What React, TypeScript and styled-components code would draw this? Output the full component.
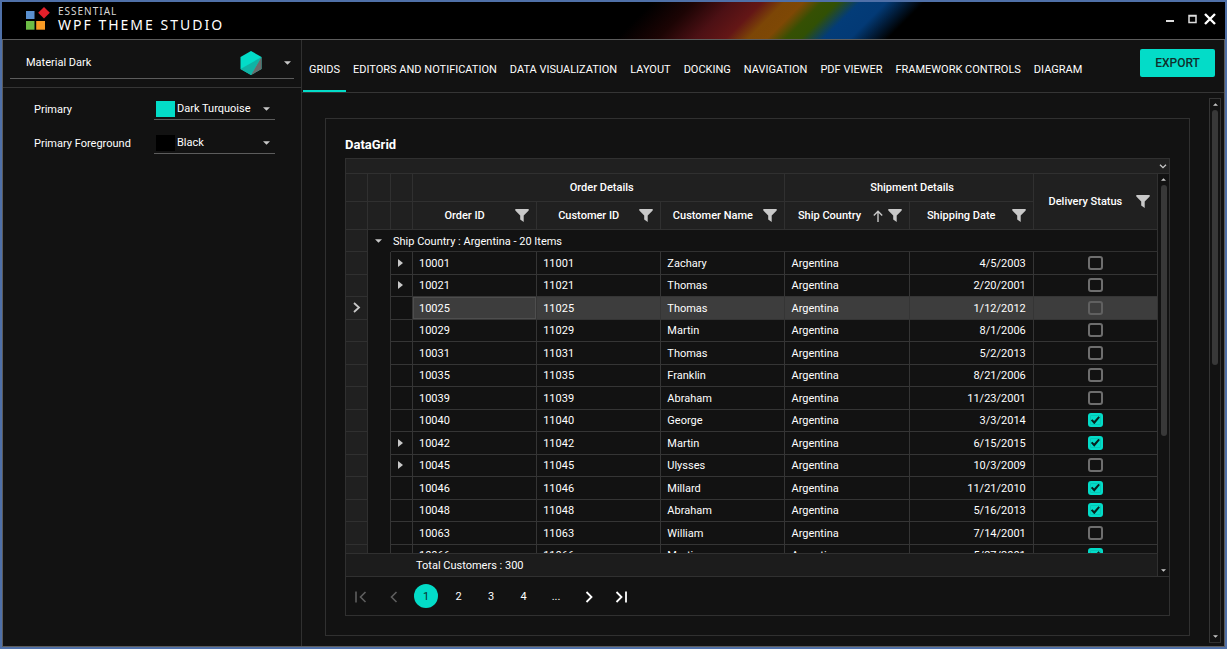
import React from "react";
import styled, { createGlobalStyle, css } from "styled-components";

const c = {
  frame: "#4f70a8",
  bg: "#121212",
  raised: "#202020",
  line: "#303030",
  lineStrong: "#353535",
  edge: "#5c5c5c",
  text: "#ffffff",
  icon: "#c8c8c8",
  accent: "#03dcc8",
};

const Global = createGlobalStyle`
  *, *::before, *::after { box-sizing: border-box; }
  body { margin: 0; background: ${c.bg}; }
  body, button, select, input { font-family: Roboto, "Liberation Sans", sans-serif; font-size: 11px; font-weight: 400; line-height: 16px; color: ${c.text}; }
  button { background: none; border: 0; padding: 0; }
  svg { display: block; flex: none; }
`;

const Window = styled.div`
  height: 100vh;
  display: flex;
  flex-direction: column;
  border: 2px solid ${c.frame};
  background: ${c.bg};
`;

const TitleBar = styled.header`
  flex: none;
  height: 37px;
  display: flex;
  align-items: center;
  justify-content: space-between;
  padding: 0 9px 4px 24px;
  background: linear-gradient(
      135deg,
      #000 14%, #1c0404 25%, #4c1014 35%, #631616 43%, #7c4606 49%, #7e4805 54%,
      #365003 59%, #315004 63%, #033c78 69%, #033a76 76%, #000 86%
    ) 598px 0 / 340px 100% no-repeat #000;
`;

const Brand = styled.div`
  display: flex;
  align-items: center;
  gap: 8px;
  font-family: "Noto Sans", "Open Sans", sans-serif;
  color: #fff;
`;

const BrandSmall = styled.div`
  font-size: 10px;
  line-height: 12px;
  letter-spacing: 1px;
  color: #d8d8d8;
`;

const BrandLarge = styled.div`
  font-size: 14px;
  line-height: 16px;
  letter-spacing: 2px;
`;

const WindowButtons = styled.div`
  display: flex;
  align-items: center;
  gap: 7px;
`;

const Workspace = styled.div`
  flex: 1;
  min-height: 0;
  display: flex;
  border: 1px solid ${c.edge};
`;

const Sidebar = styled.aside`
  flex: none;
  width: 299px;
  border-right: 1px solid ${c.line};
`;

const ThemePicker = styled.div`
  height: 48px;
  padding: 8px 7px 0;
  border-bottom: 1px solid ${c.lineStrong};
`;

const ThemeField = styled.label`
  display: flex;
  align-items: center;
  height: 31px;
  padding: 0 3px 0 16px;
  border-bottom: 1px solid ${c.edge};
`;

const HexIcon = styled.svg`
  margin-right: 22px;
`;

const Select = styled.select`
  flex: 1;
  min-width: 0;
  height: 20px;
  padding: 0;
  border: 0;
  appearance: none;
  background: transparent;
  color: ${c.text};
`;

const Settings = styled.div`
  display: flex;
  flex-direction: column;
  gap: 13px;
  padding: 11px 26px 0 31px;
`;

const Setting = styled.label`
  display: flex;
  align-items: center;
  justify-content: space-between;
`;

const ColorField = styled.span`
  display: flex;
  align-items: center;
  width: 121px;
  height: 21px;
  padding: 0 5px 0 2px;
  border-bottom: 1px solid ${c.edge};
`;

const Swatch = styled.span<{ $color: string }>`
  width: 19px;
  height: 16px;
  margin-right: 2px;
  background: ${(p) => p.$color};
`;

const Main = styled.main`
  flex: 1;
  min-width: 0;
  display: flex;
  flex-direction: column;
`;

const TopBar = styled.div`
  flex: none;
  display: flex;
  justify-content: space-between;
  height: 53px;
  padding: 0 9px 0 1px;
  border-bottom: 1px solid ${c.lineStrong};
`;

const Tabs = styled.nav`
  display: flex;
`;

const Tab = styled.a<{ $active?: boolean }>`
  padding: 22px 6px 0;
  color: ${c.text};
  text-decoration: none;
  white-space: nowrap;
  border-bottom: 2px solid ${(p) => (p.$active ? c.accent : "transparent")};
  & + & {
    margin-left: 1px;
  }
`;

const ExportButton = styled.button`
  width: 75px;
  height: 28px;
  margin-top: 9px;
  border-radius: 2px;
  background: ${c.accent};
  color: #10302d;
  font-size: 12px;
  font-weight: 500;
`;

const Content = styled.div`
  flex: 1;
  min-height: 0;
  display: flex;
  gap: 19px;
  padding: 5px 3px 3px 23px;
`;

const Panel = styled.section`
  flex: 1;
  min-width: 0;
  display: flex;
  flex-direction: column;
  margin: 20px 0 7px;
  padding: 18px 19px 19px;
  border: 1px solid ${c.line};
`;

const PanelTitle = styled.h2`
  margin: 0 0 5px;
  font-size: 13px;
  line-height: 16px;
  font-weight: 700;
  color: #fff;
`;

const Grid = styled.div`
  flex: 1;
  min-height: 0;
  display: flex;
  flex-direction: column;
  border: 1px solid ${c.line};
`;

const GroupArea = styled.div`
  flex: none;
  display: flex;
  align-items: center;
  justify-content: flex-end;
  height: 15px;
  padding-right: 2px;
  background: ${c.raised};
  border-bottom: 1px solid ${c.line};
`;

const GridBody = styled.div`
  flex: 1;
  min-height: 0;
  display: flex;
`;

const Viewport = styled.div`
  flex: 1;
  min-width: 0;
  display: flex;
  flex-direction: column;
`;

const Clip = styled.div`
  flex: 1;
  min-height: 0;
  overflow: hidden;
`;

const Table = styled.table`
  width: 100%;
  height: 393px;
  table-layout: fixed;
  border-collapse: separate;
  border-spacing: 0;
`;

const Col = styled.col<{ $w?: number }>`
  width: ${(p) => (p.$w ? p.$w + "px" : "auto")};
`;

const HeadRow = styled.tr`
  height: 28px;
`;

const GroupRow = styled.tr`
  height: 22px;
`;

const lines = css`
  border-right: 1px solid ${c.line};
  border-bottom: 1px solid ${c.line};
`;

const Head = styled.th`
  ${lines}
  padding: 0 0 0 6px;
  background: ${c.raised};
  font-weight: 500;
  text-align: center;
`;

const HeadBlank = styled.td`
  ${lines}
  padding: 0;
  background: ${c.raised};
`;

const HeadInner = styled.div`
  display: flex;
  align-items: center;
  gap: 5px;
  padding-right: 7px;
`;

const HeadLabel = styled.span`
  flex: 1;
  white-space: nowrap;
`;

const RowHeader = styled.td`
  ${lines}
  padding: 0 0 0 6px;
  background: ${c.raised};
`;

const Indent = styled.td<{ $line?: boolean }>`
  padding: 0 0 0 7px;
  border-right: 1px solid ${(p) => (p.$line ? c.lineStrong : "transparent")};
`;

const GroupCaption = styled.td`
  padding: 2px 0 0 2px;
  ${lines}
`;

const Cell = styled.td<{ $on?: boolean; $focus?: boolean }>`
  padding: 2px 7px 0 6px;
  border-right: 1px solid ${c.lineStrong};
  border-bottom: 1px solid ${c.lineStrong};
  background: ${(p) => (p.$on ? "#3d3d3d" : "transparent")};
  box-shadow: ${(p) => (p.$focus ? "inset 0 0 0 1px #4e4e4e" : "none")};
`;

const DateCell = styled(Cell)`
  text-align: right;
`;

const IconCell = styled(Cell)`
  padding: 0 7px;
`;

const Check = styled.input<{ $on?: boolean }>`
  appearance: none;
  display: grid;
  place-items: center;
  width: 15px;
  height: 14px;
  margin: 0 auto;
  border: 2px solid ${(p) => (p.$on ? "#606060" : "#6e6e6e")};
  border-radius: 3px;
  &:checked {
    border-color: ${c.accent};
    background: ${c.accent};
    box-shadow: inset 0 0 0 1px #04c8b6;
  }
  &:checked::before {
    content: "";
    width: 9px;
    height: 8px;
    background: #06201d;
    clip-path: polygon(0 54%, 16% 36%, 36% 60%, 84% 0, 100% 16%, 38% 100%);
  }
`;

const Summary = styled.div`
  flex: none;
  height: 24px;
  padding: 4px 0 0 70px;
  background: #1c1c1c;
  border: solid ${c.line};
  border-width: 1px 1px 1px 0;
`;

const Bar = styled.div<{ $framed?: boolean }>`
  flex: none;
  width: ${(p) => (p.$framed ? 12 : 11)}px;
  display: flex;
  flex-direction: column;
  align-items: center;
  padding: 4px 0;
  border: ${(p) => (p.$framed ? "1px solid " + c.lineStrong : "0")};
  border-bottom: 1px solid ${c.line};
`;

const Track = styled.div`
  flex: 1;
  width: 6px;
  padding: 4px 0;
`;

const Thumb = styled.div<{ $size: number }>`
  height: ${(p) => p.$size}%;
  border-radius: 3px;
  background: #383838;
`;

const Pager = styled.nav`
  flex: none;
  display: flex;
  align-items: center;
  justify-content: space-between;
  width: 284px;
  height: 38px;
  margin-left: 3px;
`;

const PageButton = styled.button<{ $active?: boolean; $dim?: boolean }>`
  display: grid;
  place-items: center;
  width: 24px;
  height: 24px;
  padding-top: 1px;
  border-radius: 12px;
  background: ${(p) => (p.$active ? c.accent : "transparent")};
  color: ${(p) => (p.$active ? "#06302c" : p.$dim ? "#5e5e5e" : c.text)};
`;

const Caret = ({ dir = "down", w = 7 }: { dir?: "down" | "up" | "right"; w?: number }) => {
  const tall = dir === "right";
  const d = dir === "down" ? "M0 0H8L4 4Z" : dir === "up" ? "M0 4H8L4 0Z" : "M0 0V8L5 4Z";
  return (
    <svg width={tall ? 5 : w} height={tall ? 8 : Math.round(w / 2)} viewBox={tall ? "0 0 5 8" : "0 0 8 4"} aria-hidden="true">
      <path d={d} fill={c.icon} />
    </svg>
  );
};

const Stroke = ({ w, h, d, sw = 2, color = "currentColor" }: { w: number; h: number; d: string; sw?: number; color?: string }) => (
  <svg width={w} height={h} viewBox={`0 0 ${w} ${h}`} fill="none" stroke={color} strokeWidth={sw} aria-hidden="true">
    <path d={d} />
  </svg>
);

const Funnel = () => (
  <svg width="14" height="13" viewBox="0 0 14 13" aria-hidden="true">
    <path d="M0.3 0H13.7V1.4L8.7 6.6V13L5.2 10.4V6.6L0.3 1.4Z" fill={c.icon} />
  </svg>
);

const Logo = () => (
  <svg width="24" height="24" viewBox="0 0 24 24" aria-hidden="true">
    <rect x="0" y="4" width="8.5" height="8" fill="#5a90cf" />
    <path d="M18 0L23.8 5.8L18 11.6L12.2 5.8Z" fill="#e4202a" />
    <rect x="0" y="14" width="8.5" height="8.7" fill="#6cbc45" />
    <rect x="10.2" y="14" width="8.8" height="8.7" fill="#f99b24" />
  </svg>
);

const tabs = ["GRIDS", "EDITORS AND NOTIFICATION", "DATA VISUALIZATION", "LAYOUT", "DOCKING", "NAVIGATION", "PDF VIEWER", "FRAMEWORK CONTROLS", "DIAGRAM"];

type Order = [number, string, string, boolean, boolean];
const orders: Order[] = [
  [10001, "Zachary", "4/5/2003", false, true],
  [10021, "Thomas", "2/20/2001", false, true],
  [10025, "Thomas", "1/12/2012", false, false],
  [10029, "Martin", "8/1/2006", false, false],
  [10031, "Thomas", "5/2/2013", false, false],
  [10035, "Franklin", "8/21/2006", false, false],
  [10039, "Abraham", "11/23/2001", false, false],
  [10040, "George", "3/3/2014", true, false],
  [10042, "Martin", "6/15/2015", true, true],
  [10045, "Ulysses", "10/3/2009", false, true],
  [10046, "Millard", "11/21/2010", true, false],
  [10048, "Abraham", "5/16/2013", true, false],
  [10063, "William", "7/14/2001", false, false],
  [10066, "Martin", "5/27/2001", true, false],
];
const currentOrder = 10025;

const ColumnHead = ({ label, sorted, rowSpan }: { label: string; sorted?: boolean; rowSpan?: number }) => (
  <Head rowSpan={rowSpan} scope="col">
    <HeadInner>
      <HeadLabel>{label}</HeadLabel>
      {sorted && <Stroke w={10} h={12} sw={1.4} color={c.icon} d="M5 12V1.2M0.8 5.4L5 1.2L9.2 5.4" />}
      <Funnel />
    </HeadInner>
  </Head>
);

const ColorSetting = ({ label, color, value }: { label: string; color: string; value: string }) => (
  <Setting>
    {label}
    <ColorField>
      <Swatch $color={color} />
      <Select>
        <option>{value}</option>
      </Select>
      <Caret />
    </ColorField>
  </Setting>
);

const ScrollBar = ({ size, framed }: { size: number; framed?: boolean }) => (
  <Bar $framed={framed} aria-hidden="true">
    <Caret dir="up" w={5} />
    <Track>
      <Thumb $size={size} />
    </Track>
    <Caret w={5} />
  </Bar>
);

export default function App() {
  return (
    <Window>
      <Global />
      <TitleBar>
        <Brand>
          <Logo />
          <div>
            <BrandSmall>ESSENTIAL</BrandSmall>
            <BrandLarge>WPF THEME STUDIO</BrandLarge>
          </div>
        </Brand>
        <WindowButtons>
          <button aria-label="Minimize">
            <Stroke w={15} h={12} color="#ddd" d="M0 8H8" />
          </button>
          <button aria-label="Maximize">
            <Stroke w={9} h={12} sw={1.5} color="#ddd" d="M1 2.5H8V9.5H1ZM1 3H8" />
          </button>
          <button aria-label="Close">
            <Stroke w={12} h={12} sw={2.4} color="#fff" d="M1 1L11 11M11 1L1 11" />
          </button>
        </WindowButtons>
      </TitleBar>

      <Workspace>
        <Sidebar>
          <ThemePicker>
            <ThemeField>
              <Select aria-label="Theme">
                <option>Material Dark</option>
              </Select>
              <HexIcon width="22" height="24" viewBox="0 0 22 24" aria-hidden="true">
                <path d="M11 0L21.5 6V18L11 24L0.5 18V6Z" fill={c.accent} />
                <path d="M21.5 6L0.5 18L11 24Z" fill="#0fb3a5" />
                <path d="M21.5 6V18L11 24Z" fill="#6a6a6a" />
              </HexIcon>
              <Caret />
            </ThemeField>
          </ThemePicker>
          <Settings>
            <ColorSetting label="Primary" color={c.accent} value="Dark Turquoise" />
            <ColorSetting label="Primary Foreground" color="#000" value="Black" />
          </Settings>
        </Sidebar>

        <Main>
          <TopBar>
            <Tabs>
              {tabs.map((t, i) => (
                <Tab key={t} href="#" $active={i === 0}>
                  {t}
                </Tab>
              ))}
            </Tabs>
            <ExportButton>EXPORT</ExportButton>
          </TopBar>
          <Content>
            <Panel>
              <PanelTitle>DataGrid</PanelTitle>
              <Grid>
                <GroupArea>
                  <Stroke w={8} h={5} sw={1.3} color={c.icon} d="M1 0.7L4 3.7L7 0.7" />
                </GroupArea>
                <GridBody>
                  <Viewport>
                    <Clip>
                      <Table>
                        <colgroup>
                          <Col $w={22} />
                          <Col $w={23} />
                          <Col $w={22} />
                          <Col />
                          <Col />
                          <Col />
                          <Col />
                          <Col />
                          <Col />
                        </colgroup>
                        <thead>
                          <HeadRow>
                            <HeadBlank />
                            <HeadBlank />
                            <HeadBlank />
                            <Head colSpan={3} scope="colgroup">Order Details</Head>
                            <Head colSpan={2} scope="colgroup">Shipment Details</Head>
                            <ColumnHead label="Delivery Status" rowSpan={2} />
                          </HeadRow>
                          <HeadRow>
                            <HeadBlank />
                            <HeadBlank />
                            <HeadBlank />
                            <ColumnHead label="Order ID" />
                            <ColumnHead label="Customer ID" />
                            <ColumnHead label="Customer Name" />
                            <ColumnHead label="Ship Country" sorted />
                            <ColumnHead label="Shipping Date" />
                          </HeadRow>
                        </thead>
                        <tbody>
                          <GroupRow>
                            <RowHeader />
                            <Indent>
                              <Caret />
                            </Indent>
                            <GroupCaption colSpan={7}>Ship Country : Argentina - 20 Items</GroupCaption>
                          </GroupRow>
                          {orders.map(([id, name, date, delivered, expandable]) => {
                            const on = id === currentOrder;
                            return (
                              <tr key={id}>
                                <RowHeader>{on && <Stroke w={9} h={11} sw={1.8} color={c.icon} d="M2 1L7 5.5L2 10" />}</RowHeader>
                                <Indent $line />
                                <IconCell>{expandable && <Caret dir="right" />}</IconCell>
                                <Cell $on={on} $focus={on}>{id}</Cell>
                                <Cell $on={on}>{id + 1000}</Cell>
                                <Cell $on={on}>{name}</Cell>
                                <Cell $on={on}>Argentina</Cell>
                                <DateCell $on={on}>{date}</DateCell>
                                <IconCell $on={on}>
                                  <Check type="checkbox" $on={on} defaultChecked={delivered} aria-label={`Order ${id} delivered`} />
                                </IconCell>
                              </tr>
                            );
                          })}
                        </tbody>
                      </Table>
                    </Clip>
                    <Summary>Total Customers : 300</Summary>
                  </Viewport>
                  <ScrollBar size={66} />
                </GridBody>
                <Pager aria-label="Pages">
                  <PageButton $dim aria-label="First page">
                    <Stroke w={12} h={12} sw={1.6} d="M1 0.5V11.5M10.5 1L5.5 6L10.5 11" />
                  </PageButton>
                  <PageButton $dim aria-label="Previous page">
                    <Stroke w={8} h={12} sw={1.6} d="M6.5 1L1.5 6L6.5 11" />
                  </PageButton>
                  <PageButton $active>1</PageButton>
                  <PageButton>2</PageButton>
                  <PageButton>3</PageButton>
                  <PageButton>4</PageButton>
                  <PageButton>...</PageButton>
                  <PageButton aria-label="Next page">
                    <Stroke w={8} h={12} sw={1.8} d="M1.5 1L6.5 6L1.5 11" />
                  </PageButton>
                  <PageButton aria-label="Last page">
                    <Stroke w={12} h={12} sw={1.8} d="M1.5 1L6.5 6L1.5 11M11 0.5V11.5" />
                  </PageButton>
                </Pager>
              </Grid>
            </Panel>
            <ScrollBar size={49} framed />
          </Content>
        </Main>
      </Workspace>
    </Window>
  );
}
